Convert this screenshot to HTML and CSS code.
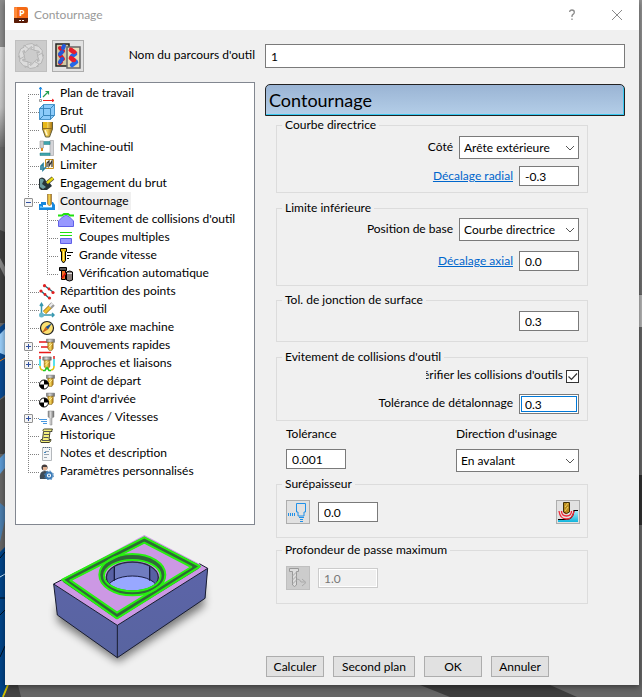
FILE: index.html
```html
<!DOCTYPE html>
<html lang="fr">
<head>
<meta charset="utf-8">
<title>Contournage</title>
<link rel="stylesheet" href="styles.css">
</head>
<body>
<svg class="backdrop" viewBox="0 0 642 697" preserveAspectRatio="none" aria-hidden="true">
  <defs>
    <linearGradient id="bgLight" x1="0" y1="0" x2="0" y2="1"><stop offset="0" stop-color="#d8d8d8"/><stop offset=".6" stop-color="#c4c4c4"/><stop offset="1" stop-color="#6e6e6e"/></linearGradient>
    <linearGradient id="bgRight" x1="0" y1="0" x2="0" y2="1"><stop offset="0" stop-color="#939393"/><stop offset="1" stop-color="#707070"/></linearGradient>
  </defs>
  <path fill="#666" d="M0 0h642v697H0z"/>
  <path fill="#8c8c8c" d="M0 0h5v47H0z"/>
  <path fill="url(#bgLight)" d="M0 47h5v100H0z"/>
  <path fill="#404040" d="M0 230l5 2v91H0z"/>
  <path fill="#888" d="M0 258l5 9v10l-5-10z"/>
  <path fill="#0a4a92" d="M0 327l5-4v72l-5 4z"/>
  <path fill="#98ccf8" d="M0 334l5-5v26l-5-2z"/>
  <path stroke="#f08010" d="M0 361l5-3"/>
  <path fill="#424242" d="M0 400l5-3v57H0z"/>
  <path fill="#5c9ad4" d="M0 458l5-5v15l-5 6z"/>
  <path fill="#4c7eae" d="M0 503l5 4v13l-5 22z"/>
  <path fill="#004488" d="M0 552l5-5v150H0z"/>
  <path fill="none" stroke="#001020" d="M0 558l5-6M0 598h5M0 615l5-5M0 657l5-11"/>
  <path stroke="#c8e8ff" d="M0 577l5-3"/>
  <path fill="url(#bgRight)" d="M639 0h3v294h-3z"/>
  <path fill="#b8b8b8" d="M639 295h3v32h-3z"/>
  <path fill="#303030" d="M639 475h3v50h-3z"/>
  <path fill="#004488" d="M0 685h8l-5 12H0z"/>
  <path stroke="#d0c000" stroke-width="2" d="M8 685l-5 12"/>
  <path fill="#444" d="M9 685h9l3 12H4z"/>
  <path fill="#3e3e3e" d="M420 685h130l27 12H450z"/>
</svg>

<svg width="0" height="0" class="defs" aria-hidden="true">
  <defs>
    <linearGradient id="gold"><stop offset="0" stop-color="#c89010"/><stop offset=".45" stop-color="#f6d860"/><stop offset="1" stop-color="#a87008"/></linearGradient>
    <linearGradient id="steel"><stop offset="0" stop-color="#777"/><stop offset=".4" stop-color="#ddd"/><stop offset="1" stop-color="#666"/></linearGradient>
    <linearGradient id="water" x1="0" y1="0" x2="0" y2="1"><stop offset="0" stop-color="#a8ecf8"/><stop offset="1" stop-color="#10b4dc"/></linearGradient>
    <symbol id="mill" viewBox="0 0 10 16"><path fill="url(#steel)" stroke="#666" stroke-width=".6" d="M.5 1h9v3.500H.5z"/><path fill="url(#gold)" stroke="#806020" stroke-width=".6" d="M2 4.500h6V11l-1.500 2.500h-3L2 11z"/><path stroke="#fff0a0" d="M3 10l4-4M3 7l2-2"/></symbol>
    <symbol id="datum" viewBox="0 0 16 16"><use href="#mill" x="7" y="0" width="9" height="15"/><circle cx="5" cy="10.500" r="4.500" fill="#fff" stroke="#000"/><path d="M5 10.500V6a4.500 4.500 0 0 1 4.500 4.500zM5 10.500V15A4.500 4.500 0 0 1 .5 10.500z"/></symbol>
  </defs>
</svg>

<main class="dialog">
  <header class="titlebar">
    <svg class="app-icon" viewBox="0 0 14 16"><path fill="#f46a14" d="M1 0h11q2 0 2 2v12q0 2-2 2H1q-1 0-1-1V1q0-1 1-1z"/><path fill="#ff8a3c" d="M0 1l3-1v11H0z"/><path fill="#5a1c08" d="M0 11h14v3q0 2-2 2H1q-1 0-1-1z"/><text x="5" y="9" class="app-letter">P</text><path stroke="#fff" stroke-dasharray="2 1" d="M5 13.500h5"/></svg>
    <h1 class="title">Contournage</h1>
    <button class="win-btn" type="button" aria-label="Aide"><svg viewBox="0 0 12 12"><path fill="none" stroke="#8a8a8a" stroke-width="1.300" d="M3.700 3Q3.700 1 6 1T8.300 3.200Q8.300 4.500 7 5.400T6 7.500V8M6 9.600V11"/></svg></button>
    <button class="win-btn" type="button" aria-label="Fermer"><svg viewBox="0 0 12 12"><path stroke="#8a8a8a" d="M1 1l10 10M11 1L1 11"/></svg></button>
  </header>

  <div class="name-bar">
    <button class="tool-btn off" type="button" disabled aria-label="Recycler"><svg viewBox="0 0 30 30"><g fill="#dcdcdc" stroke="#b0b0b0" stroke-width=".8"><path id="rc" d="M10.500 3.500L16 2.500l3 2 2-1-1 6-5.500-1.500 2-1.500-1.500-1-3.500 4L7 7z"/><use href="#rc" transform="rotate(60 15 15)"/><use href="#rc" transform="rotate(120 15 15)"/><use href="#rc" transform="rotate(180 15 15)"/><use href="#rc" transform="rotate(240 15 15)"/><use href="#rc" transform="rotate(300 15 15)"/></g></svg></button>
    <button class="tool-btn" type="button" aria-label="Copier le parcours"><svg viewBox="0 0 30 30"><path fill="#cfc8a4" stroke="#222" stroke-width="1.500" d="M3 3h13v22H3z"/><g stroke-linecap="round" fill="none" stroke-width="4"><path stroke="#d81c2c" d="M7 7l3 3M7 14l3 4M7 22l1-1"/><path stroke="#2458d8" d="M11 5l-1 2M9 11l-2 2M9 18l-2 3"/></g><path fill="#e8dcb8" stroke="#666" stroke-width="1.500" d="M14 6h13v21H14z"/><g stroke-linecap="round" fill="none" stroke-width="4.500"><path stroke="#e81c2c" d="M18 9l4 3M18 17l4 4"/><path stroke="#2468e8" d="M22 13l-3 2M23 21l-4 3"/><path stroke="#e81c2c" d="M18 9l3 2M18 17l3 2"/></g></svg></button>
    <label class="name-label" for="toolpath">Nom du parcours d'outil</label>
    <input class="field name-input" id="toolpath" value="1">
  </div>

  <div class="body">
    <div class="side">
      <nav class="tree-box" aria-label="Pages">
        <ul class="tree">
          <li><div class="row"><svg class="ico" viewBox="0 0 16 16"><path fill="none" stroke="#1c88e0" d="M1.500 12V1M0 3.500L1.500 1 3 3.500"/><path fill="none" stroke="#20a050" stroke-width="1.200" d="M4 11l5-5M6.500 5.500H9.500V8.500"/><path fill="none" stroke="#f02020" d="M4 14.500h11M13 13l2 1.500L13 16"/><path fill="#fff" stroke="#999" d="M.5 13.500h2v2h-2z"/></svg><span class="name">Plan de travail</span></div></li>
          <li><div class="row"><svg class="ico" viewBox="0 0 16 16"><path fill="#8ccbfa" stroke="#4a96cc" d="M.5 4.500l4-4h11v11l-4 4H.5z"/><path fill="none" stroke="#3a86bc" d="M.5 4.500h11v11M11.500 4.500l4-4M4.500 .5v11h11M.5 15.500l4-4"/></svg><span class="name">Brut</span></div></li>
          <li><div class="row"><svg class="ico" viewBox="0 0 16 16"><path fill="url(#gold)" stroke="#66603c" d="M3.500 0V7l3 8h4l3-8V0"/><path fill="#e8b818" d="M4 0h4v6H4z"/><path stroke="#907020" d="M3.500 6.500h10"/><path stroke="#fff8d0" stroke-width="1.500" d="M6 8l2 5"/></svg><span class="name">Outil</span></div></li>
          <li><div class="row"><svg class="ico" viewBox="0 0 16 16"><path fill="#d4d4d8" stroke="#a8a8ac" stroke-width=".7" d="M11 .5h3.500v15H11z"/><path fill="#3ca4ac" stroke="#207880" stroke-width=".5" d="M3 1.500h8v3H3zM1 13h10v2.500H1z"/><path fill="#ccc" stroke="#999" stroke-width=".6" d="M1 1h3.500v7H1z"/><path fill="#d88820" d="M2 8h2v3H2z"/></svg><span class="name">Machine-outil</span></div></li>
          <li><div class="row"><svg class="ico" viewBox="0 0 16 16"><path fill="#fff8e0" stroke="#c89020" d="M6.500 1.500h8v9h-8z"/><path fill="none" stroke="#333" stroke-width="1.200" d="M8 9V5l2-2v5l3-5v6"/><path fill="none" stroke="#28809c" stroke-width="1.700" d="M2 12V8l2-2v6l3-3"/></svg><span class="name">Limiter</span></div></li>
          <li><div class="row"><svg class="ico" viewBox="0 0 16 16"><path fill="#283438" d="M0 3q3-3 6 0l2 4 2-1 3 4-5 4H2l-2-2z"/><path fill="#6c9ca0" d="M1 3q2-1 4 1L3 8l4 3-3 2-3-2z"/><path stroke="#444" stroke-width="4" d="M8 7l6-5"/><path stroke="#e8d810" stroke-width="2.500" d="M8 7l6-5"/></svg><span class="name">Engagement du brut</span></div></li>
          <li class="open"><div class="row"><button class="toggle minus" type="button" aria-label="Réduire"></button><svg class="ico" viewBox="0 0 16 16"><path fill="#1888dc" d="M0 10h2V8h5v3H4v2h9V8h1l2 3v5H0z"/><path fill="#60bcf4" d="M1 12h2v1h10v1H1z"/><path fill="url(#gold)" stroke="#907040" stroke-width=".7" d="M8.500 0h4v10l-2 2-2-2z"/></svg><span class="name selected">Contournage</span></div>
            <ul class="tree nested">
              <li><div class="row"><svg class="ico" viewBox="0 0 16 16"><path fill="#9898ff" stroke="#6060e8" d="M.5 14.500V9l4-4 3.500-2 3.500 2 4 4v5.500z"/><path fill="none" stroke="#20e010" stroke-width="2" d="M0 3.500h4L6 2h4l2 1.500h4"/></svg><span class="name">Evitement de collisions d'outil</span></div></li>
              <li><div class="row"><svg class="ico" viewBox="0 0 16 16"><path stroke="#20e010" d="M2 2.500h12M2 5.500h12"/><path fill="#9898ff" stroke="#6060e8" d="M2.500 8.500h11v5h-11z"/></svg><span class="name">Coupes multiples</span></div></li>
              <li><div class="row"><svg class="ico" viewBox="0 0 16 16"><path fill="#e8b810" stroke="#000" d="M2.500 .5h6v3h-1v9L5.500 15l-2-2.500v-9h-1z"/><path stroke="#fff080" d="M5.500 3v9"/><path stroke="#000" d="M9 4.500h6M9 7.500h4M9 10.500h2"/></svg><span class="name">Grande vitesse</span></div></li>
              <li><div class="row"><svg class="ico" viewBox="0 0 16 16"><path fill="#555" stroke="#000" d="M1.500 1.500h7v3h-7z"/><path fill="#f07020" stroke="#000" d="M3.500 4.500h4v9h-4z"/><path stroke="#d81810" stroke-width="2" d="M4 12l4-5"/><path fill="#887c78" stroke="#000" d="M8.500 6q3.500-2 6 0v8q-3 2-6 0z"/><path stroke="#ddd" d="M9 7.500h5"/></svg><span class="name">Vérification automatique</span></div></li>
            </ul>
          </li>
          <li><div class="row"><svg class="ico" viewBox="0 0 16 16"><path stroke="#186878" stroke-width="1.300" d="M2 7l8 7M6 2l8 6"/><g fill="#e02020"><circle cx="2" cy="7" r="1.600"/><circle cx="6" cy="10.500" r="1.400"/><circle cx="10.500" cy="14" r="1.600"/><circle cx="5.500" cy="1.700" r="1.600"/><circle cx="10" cy="5" r="1.400"/><circle cx="14" cy="8.500" r="1.600"/></g></svg><span class="name">Répartition des points</span></div></li>
          <li><div class="row"><svg class="ico" viewBox="0 0 16 16"><path fill="none" stroke="#3898b0" stroke-width="1.500" d="M2.500 13V2M1 4l1.500-2.500L4 4M3 13h12M13 11l2 2-2 2"/><circle cx="2.500" cy="13" r="2.500" fill="#68b8cc"/><path stroke="#987018" stroke-width="4.500" d="M5.500 10.500l6-6"/><path stroke="#f0c030" stroke-width="3" d="M5.500 10.500l6-6"/><path stroke="#999" stroke-width="5" d="M11 5l3-3"/><path stroke="#eee" stroke-width="2" d="M10.500 4.500l3-3"/></svg><span class="name">Axe outil</span></div></li>
          <li><div class="row"><svg class="ico" viewBox="0 0 16 16"><circle cx="8" cy="8" r="6.500" fill="#fce070" stroke="#222" stroke-width="1.200"/><path fill="#205090" d="M13 3L9 9.500 6.500 7z"/><path fill="#c86018" d="M3 13l3.500-6L9 9.500z"/></svg><span class="name">Contrôle axe machine</span></div></li>
          <li><div class="row"><button class="toggle plus" type="button" aria-label="Développer"></button><svg class="ico" viewBox="0 0 16 16"><path stroke="#e81818" stroke-width="1.500" d="M0 4h9M2 9h9M0 14.500h12"/><use href="#mill" x="7" y="0" width="9" height="15"/></svg><span class="name">Mouvements rapides</span></div></li>
          <li><div class="row"><button class="toggle plus" type="button" aria-label="Développer"></button><svg class="ico" viewBox="0 0 16 16"><use href="#mill" x="3" y="0" width="10" height="15"/><g fill="none" stroke-width="1.500"><path stroke="#e02020" d="M1 0v3M15 0v3"/><path stroke="#20d8e8" d="M1 3v7M15 3v7"/><path stroke="#d8c010" d="M1 10q0 4 3 4M15 10q0 4-3 4"/><path stroke="#20c820" d="M4 14.500h2l2-3 2 3h2"/></g></svg><span class="name">Approches et liaisons</span></div></li>
          <li><div class="row"><svg class="ico" viewBox="0 0 16 16"><use href="#datum" width="16" height="16"/></svg><span class="name">Point de départ</span></div></li>
          <li><div class="row"><svg class="ico" viewBox="0 0 16 16"><use href="#datum" width="16" height="16"/></svg><span class="name">Point d'arrivée</span></div></li>
          <li><div class="row"><button class="toggle plus" type="button" aria-label="Développer"></button><svg class="ico" viewBox="0 0 16 16"><path stroke="#4898e0" d="M0 9.500h8M2 11.500h6M4 13.500h4"/><path fill="url(#steel)" stroke="#888" stroke-width=".5" d="M9 1h6v6l-2 1v7h-2V8L9 7z"/></svg><span class="name">Avances / Vitesses</span></div></li>
          <li><div class="row"><svg class="ico" viewBox="0 0 16 16"><path fill="#f4f07c" stroke="#44442c" d="M4 2.500q0-1.500 1.500-1.500h8q-1 1-.5 2.500h-2l-1 8h2q0 2.500-2 3H2q-1-1 0-3h1.500l1-8z"/><path stroke="#555" d="M5 3.500h7M5 6.500h5M4.500 9.500h5M3 12.500h8"/></svg><span class="name">Historique</span></div></li>
          <li><div class="row"><svg class="ico" viewBox="0 0 16 16"><path fill="#f4f6f8" stroke="#b4b8bc" d="M3.500 1.500h9v13h-9z"/><path stroke="#506880" d="M4 1.500h8" stroke-dasharray="1 1"/><path stroke="#98a4b0" d="M6 5.500h4M5 8.500h5M5 11.500h3"/><path stroke="#4088c0" d="M10 3.500h1M5 6.500h2"/></svg><span class="name">Notes et description</span></div></li>
          <li><div class="row"><svg class="ico" viewBox="0 0 16 16"><circle cx="5.500" cy="3.500" r="3" fill="#443c3c"/><path fill="#e0b090" d="M4 3h4v3H4z"/><path fill="#404c58" d="M1 15q-1-8 4.500-8 5 0 5 3l-2 5z"/><circle cx="10" cy="11.500" r="3" fill="#fff" stroke="#3c7cb8" stroke-width="1.800"/><circle cx="10" cy="11.500" r="4.500" fill="none" stroke="#3c7cb8" stroke-dasharray="1.700 1.834"/><circle cx="10" cy="11.500" r="1" fill="#3c7cb8"/></svg><span class="name">Paramètres personnalisés</span></div></li>
        </ul>
      </nav>
      <svg class="preview" viewBox="120 135 540 450" role="img" aria-label="Aperçu du contournage">
        <defs>
          <filter id="soft" x="-20%" y="-20%" width="140%" height="150%"><feGaussianBlur stdDeviation="13"/></filter>
          <linearGradient id="face" x1="0" y1="0" x2="0" y2="1"><stop offset="0" stop-color="#5c64a8"/><stop offset="1" stop-color="#5864a0"/></linearGradient>
          <clipPath id="hole"><ellipse cx="397" cy="292" rx="78" ry="46"/></clipPath>
        </defs>
        <path fill="#000" opacity=".5" filter="url(#soft)" d="M172 370l180 90 256-150 5 68-258 168-183-122z"/>
        <path fill="#cc98e4" d="M161 312l272-147 190 100-271 171z"/>
        <path fill="url(#face)" d="M161 312l191 124v97L172 405zM623 265L352 436v97l264-178z"/>
        <g clip-path="url(#hole)"><path fill="#5860a4" d="M310 240h180v110H310z"/><path fill="#707cc0" d="M345 240h105v60H345z"/><ellipse cx="397" cy="328" rx="76" ry="40" fill="#98a8ff" stroke="#181c40" stroke-width="3"/><path fill="none" stroke="#181c40" stroke-width="4" d="M343 250v52M449 250v52"/></g>
        <ellipse cx="397" cy="292" rx="78" ry="46" fill="none" stroke="#282840" stroke-width="4"/>
        <path fill="none" stroke="#181c30" stroke-width="3" stroke-linejoin="round" d="M161 312l191 124 271-171-8 90-263 178-180-128zM352 436v97M161 312l27-14M623 265l-25-14"/>
        <g fill="none" stroke="#306838" stroke-width="16" stroke-linejoin="round"><path d="M433 180l157 80-239 148-155-107z"/><ellipse cx="397" cy="285" rx="92" ry="54"/></g>
        <g fill="none" stroke="#28f010" stroke-width="6" stroke-linejoin="round"><path d="M433 172l167 87-249 156-164-116z"/><path d="M433 188l141 73-223 137-140-97z"/><ellipse cx="397" cy="284" rx="99" ry="62"/><ellipse cx="397" cy="287" rx="85" ry="47"/></g>
      </svg>
    </div>

    <form class="page">
      <h2 class="banner">Contournage</h2>
      <fieldset class="group">
        <legend>Courbe directrice</legend>
        <div class="line"><label for="side">Côté</label><span class="select wide"><select id="side"><option>Arête extérieure</option></select><svg viewBox="0 0 10 6"><path d="M1 1l4 4 4-4"/></svg></span></div>
        <div class="line"><a href="#radial">Décalage radial</a><input class="field num" id="radial" aria-label="Décalage radial" value="-0.3"></div>
      </fieldset>
      <fieldset class="group roomy">
        <legend>Limite inférieure</legend>
        <div class="line"><label for="base">Position de base</label><span class="select wide"><select id="base"><option>Courbe directrice</option></select><svg viewBox="0 0 10 6"><path d="M1 1l4 4 4-4"/></svg></span></div>
        <div class="line"><a href="#axial">Décalage axial</a><input class="field num" id="axial" aria-label="Décalage axial" value="0.0"></div>
      </fieldset>
      <fieldset class="group single">
        <legend>Tol. de jonction de surface</legend>
        <div class="line"><input class="field num" aria-label="Tol. de jonction de surface" value="0.3"></div>
      </fieldset>
      <fieldset class="group checks">
        <legend>Evitement de collisions d'outil</legend>
        <div class="line tight"><label class="clipped" for="check"><span>Vérifier les collisions d'outils</span></label><span class="check"><input type="checkbox" id="check" checked><svg viewBox="0 0 13 13"><path d="M2.500 6.500l3 3 5.500-6"/></svg></span></div>
        <div class="line"><label for="heel">Tolérance de détalonnage</label><input class="field num active" id="heel" value="0.3"></div>
      </fieldset>
      <div class="pair">
        <div class="stack"><label for="tol">Tolérance</label><input class="field num" id="tol" value="0.001"></div>
        <div class="stack"><label for="dir">Direction d'usinage</label><span class="select"><select id="dir"><option>En avalant</option></select><svg viewBox="0 0 10 6"><path d="M1 1l4 4 4-4"/></svg></span></div>
      </div>
      <fieldset class="group amount">
        <legend>Surépaisseur</legend>
        <div class="line start"><button class="mini" type="button" aria-label="Surépaisseur radiale"><svg viewBox="0 0 22 22"><path fill="none" stroke="#2090e8" d="M9.500 2.500V11h1.500v4h6v-4h1.500V2.500z"/><path stroke="#2090e8" stroke-width="3" stroke-dasharray="1 1" d="M1 13.500h8"/><path stroke="#2090e8" d="M12 16.500h5M13 18.500h3M13 20.500h3"/></svg></button><input class="field num" aria-label="Surépaisseur" value="0.0"><button class="mini end" type="button" aria-label="Surépaisseurs des composants"><svg viewBox="0 0 22 22"><path fill="url(#water)" d="M1 19h8q7 0 8-9h4v11H1z"/><path fill="none" stroke="#000" stroke-width="1.200" d="M1 18.500h8q7 0 8-9h4"/><g fill="none" stroke="#f02838" stroke-width="1.300"><path d="M2 10q1 8 7.500 8T17 10M4.500 10q0 5 5 5t5-5M7 10q0 2.500 2.500 2.500"/></g><path fill="#b88c20" stroke="#403008" d="M6.500 1.500h6V11q-3 3-6 0z"/><path stroke="#f0d060" d="M8 10l3-4M8 6l3-4"/></svg></button></div>
      </fieldset>
      <fieldset class="group amount last">
        <legend>Profondeur de passe maximum</legend>
        <div class="line start"><button class="mini off" type="button" disabled aria-label="Profondeur"><svg viewBox="0 0 22 22"><path fill="#ddd" stroke="#999" d="M2.500 1.500h9v3h-2V18q-2 3-4 0V4.500h-3z"/><path stroke="#aaa" d="M5.500 9l4-4M5.500 13l4-4M5.500 17l4-4"/><path fill="none" stroke="#aaa" d="M10 12q3 0 4 3h4M15 12l4 3.500-4 3.500"/></svg></button><input class="field num" aria-label="Profondeur de passe maximum" value="1.0" disabled></div>
      </fieldset>
      <div class="actions">
        <button class="btn" type="button">Calculer</button>
        <button class="btn long" type="button">Second plan</button>
        <button class="btn" type="button">OK</button>
        <button class="btn" type="button">Annuler</button>
      </div>
    </form>
  </div>
</main>
</body>
</html>
```
FILE: styles.css
```css
* { box-sizing: border-box; }

body {
  margin: 0;
  background: #666;
  color: #000;
  font: 12px/16px Lato, "Open Sans", sans-serif;
}

button, input, select { font: inherit; color: inherit; margin: 0; }

.backdrop { position: absolute; inset: 0; width: 100%; height: 100%; z-index: -1; }
.defs { position: absolute; }

.dialog {
  margin: 0 3px 12px 5px;
  background: #f0f0f0;
  box-shadow: 0 2px 6px rgba(0, 0, 0, .45);
  padding-bottom: 8px;
}

/* Title bar */
.titlebar { display: flex; align-items: center; height: 30px; padding-left: 9px; background: #fff; }
.app-icon { width: 14px; height: 16px; }
.app-letter { font: bold 9px "Open Sans", sans-serif; fill: #fff; }
.title { margin: 0 auto 0 6px; font-size: 12px; font-weight: 400; color: #999; }
.win-btn { width: 45px; height: 30px; padding: 0; border: 0; background: none; display: grid; place-items: center; }
.win-btn svg { width: 12px; height: 12px; }

/* Name bar */
.name-bar { display: flex; align-items: center; gap: 5px; padding: 10px 14px 10px 10px; }
.tool-btn { width: 32px; height: 32px; padding: 0; border: 1px solid #adadad; background: #e1e1e1; }
.tool-btn svg { display: block; width: 30px; height: 30px; }
.off { background: #ccc; border-color: #bfbfbf; }
.name-label { width: 171px; margin-left: -5px; text-align: right; padding-bottom: 2px; }
.name-input { flex: 1; min-width: 0; height: 24px; margin-left: 5px; }

.field { border: 1px solid #7a7a7a; background: #fff; padding: 0 5px; border-radius: 0; outline: 0; }
.num { width: 60px; height: 20px; }
.field:disabled { border-color: #ccc; background: #f0f0f0; color: #777; box-shadow: inset 0 0 0 1px #fff; }
.active { box-shadow: inset 0 0 0 1px #fff, inset 0 0 0 2px #0078d7; }

.body { display: grid; grid-template-columns: 240px 1fr; gap: 10px; padding: 0 14px 0 10px; }

/* Tree */
.side { display: flex; flex-direction: column; }
.tree-box { height: 443px; border: 1px solid #828790; background: #fff; padding: 1px 0; }
.tree { --x: 12px; list-style: none; margin: 0; padding: 0; }
.tree li {
  background: repeating-linear-gradient(#808080 0 1px, transparent 1px 2px) var(--x) 0 / 1px 100% no-repeat;
}
.tree > li:first-child { background-position: var(--x) 10px; }
.tree > li:last-child { background-size: 1px 10px; }
.nested { --x: 31px; }
.nested > li:first-child { background-position: var(--x) 0; }
.row {
  display: flex;
  align-items: center;
  height: 18px;
  padding-left: 23px;
  background: repeating-linear-gradient(90deg, #808080 0 1px, transparent 1px 2px) 12px 10px / 11px 1px no-repeat;
}
.nested .row { padding-left: 42px; background-position: 31px 10px; }
.ico { width: 16px; height: 16px; flex: none; margin-top: 1px; }
.name { padding: 0 2px; margin-left: 3px; line-height: 18px; white-space: nowrap; }
.selected { background: #f0f0f0; }
.toggle {
  width: 9px; height: 9px; padding: 0; margin: 2px 6px 0 -15px;
  border: 1px solid #919191; border-radius: 1px;
}
.minus { background: linear-gradient(#3050a0, #3050a0) center / 5px 1px no-repeat, #f4f4f4; }
.plus {
  background: linear-gradient(#3050a0, #3050a0) center / 5px 1px no-repeat,
    linear-gradient(#3050a0, #3050a0) center / 1px 5px no-repeat, #f4f4f4;
}
.preview { width: 180px; height: 150px; margin: 0 0 2px 25px; }

/* Settings page */
.page { display: flex; flex-direction: column; padding-top: 2px; }
.banner {
  margin: 0 0 1px; height: 32px; padding-left: 3px;
  font-size: 18px; font-weight: 400; line-height: 31px;
  border: 1px solid #222; border-radius: 5px 5px 0 0;
  background: linear-gradient(#9ab4d4, #b4cee8);
  box-shadow: inset -1px -1px 0 #38c8f0;
}
.group {
  display: flex; flex-direction: column; gap: 7px;
  min-width: 0; margin: 0 37px 7px 11px; padding: 3px 8px 6px 9px;
  border: 1px solid #dcdcdc;
}
.group legend { margin-left: -4px; padding: 0 3px; }
.roomy { gap: 10px; padding-top: 2px; padding-bottom: 14px; margin-bottom: 6px; }
.single { padding-bottom: 10px; }
.checks { gap: 10px; margin-bottom: 5px; }
.line { display: flex; align-items: center; justify-content: flex-end; gap: 6px; }
.line a { color: #0066cc; }
.line label { padding-bottom: 2px; }
.tight { gap: 3px; height: 16px; }
.clipped { display: flex; justify-content: flex-end; width: 137px; overflow: hidden; white-space: nowrap; }
.select { position: relative; display: block; }
.wide { width: 120px; }
.select select {
  display: block; width: 100%; height: 23px; padding: 0 4px; appearance: none;
  border: 1px solid #7a7a7a; border-radius: 0; background: #fff;
}
.select svg { position: absolute; right: 4px; top: 9px; width: 10px; height: 6px; pointer-events: none; }
.select path { fill: none; stroke: #555; }
.check { position: relative; width: 13px; height: 13px; }
.check input { display: block; appearance: none; width: 13px; height: 13px; border: 1px solid #333; background: #fff; }
.check svg { position: absolute; inset: 0; pointer-events: none; }
.check path { fill: none; stroke: #333; stroke-width: 1.2; }
.pair { display: flex; justify-content: space-between; margin: 0 46px 4px 21px; }
.stack { display: flex; flex-direction: column; gap: 7px; }
.stack:last-child { width: 123px; }
.amount { margin-bottom: 4px; padding: 8px 7px 13px 9px; }
.start { justify-content: flex-start; gap: 8px; }
.mini { width: 24px; height: 24px; padding: 0; border: 1px solid #adadad; background: #e1e1e1; }
.mini.off { background: #ccc; border-color: #bfbfbf; }
.mini svg { display: block; width: 22px; height: 22px; }
.end { margin-left: auto; }
.actions { display: flex; gap: 9px; margin: auto 0 0 1px; }
.btn { width: 58px; height: 21px; padding: 0; border: 1px solid #adadad; background: #e1e1e1; white-space: nowrap; }
.long { width: 82px; }
```
